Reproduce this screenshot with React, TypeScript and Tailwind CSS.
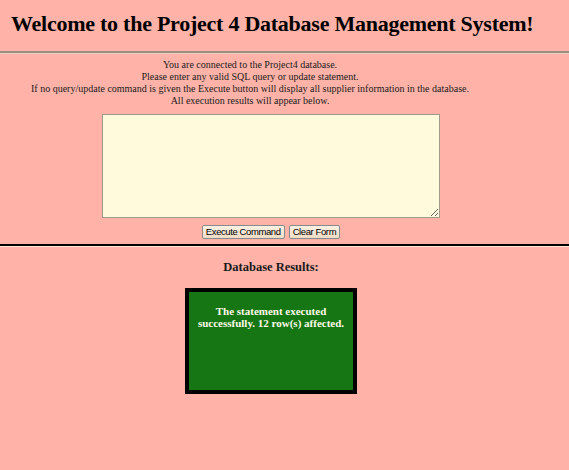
export default function App() {
  return (
    <div className="min-h-[470px] w-full bg-[#ffb3a8] text-black" style={{ fontFamily: '"Liberation Serif", "Times New Roman", serif' }}>
      <div className="pl-[11px] pt-[11px] pb-[14px]">
        <h1 className="whitespace-nowrap text-[22px] font-bold leading-[26px] tracking-[-0.25px]">Welcome to the Project 4 Database Management System!</h1>
      </div>
      <div className="h-[3px] border-t-2 border-[#9c8c7e] border-b border-b-[#e8d0c4]" />
      <div className="pr-[27px]">
        <div className="mt-[5px] flex flex-col items-center pr-[42px] text-[10px] leading-[12px] text-[#1a1a1a]">
          <p className="whitespace-nowrap">You are connected to the Project4 database.</p>
          <p className="whitespace-nowrap">Please enter any valid SQL query or update statement.</p>
          <p className="whitespace-nowrap">If no query/update command is given the Execute button will display all supplier information in the database.</p>
          <p className="whitespace-nowrap">All execution results will appear below.</p>
        </div>
        <div className="flex flex-col items-center">
          <textarea className="mt-[7px] block h-[104px] w-[338px] resize border border-[#a49a8c] bg-[#fffadc] outline-none" />
          <div className="mt-[7px] flex gap-[4px]" style={{ fontFamily: '"Liberation Sans", Arial, sans-serif' }}>
            <button className="h-[14px] rounded-[2px] border border-[#8a8a8a] bg-gradient-to-b from-[#fbf1e4] to-[#efdcc6] px-[3px] text-[9.5px] leading-[10px] tracking-[-0.4px]">Execute Command</button>
            <button className="h-[14px] rounded-[2px] border border-[#8a8a8a] bg-gradient-to-b from-[#fbf1e4] to-[#efdcc6] px-[3px] text-[9.5px] leading-[10px] tracking-[-0.4px]">Clear Form</button>
          </div>
        </div>
      </div>
      <div className="mt-[5px] h-[3px] border-t-2 border-black border-b border-b-[#ffe8dc]" />
      <div className="flex flex-col items-center pr-[27px]">
        <h2 className="mt-[13px] text-[12.5px] font-bold leading-[15px] text-[#1a1a1a]">Database Results:</h2>
        <div className="mt-[13px] h-[106px] w-[172px] border-[4px] border-black bg-[#167614] px-[3px] pt-[13px] text-center text-[11px] font-bold leading-[12px] text-[#fffbe8]">
          The statement executed successfully. 12 row(s) affected.
        </div>
      </div>
    </div>
  );
}
